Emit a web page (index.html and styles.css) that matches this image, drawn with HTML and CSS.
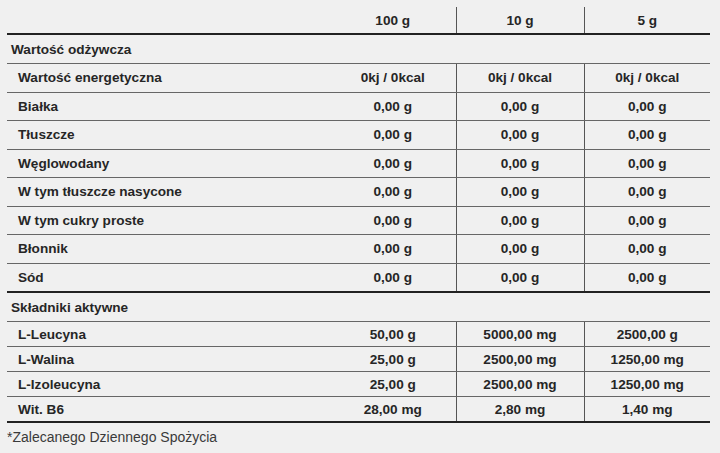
FILE: index.html
```html
<!DOCTYPE html>
<html lang="pl">
<head>
<meta charset="utf-8">
<link rel="stylesheet" href="styles.css">
</head>
<body>
<table class="nutri">
  <colgroup>
    <col class="col-label">
    <col class="col-v1">
    <col class="col-v2">
    <col class="col-v3">
  </colgroup>
  <thead>
    <tr class="head">
      <th></th>
      <th>100 g</th>
      <th class="sep">10 g</th>
      <th class="sep">5 g</th>
    </tr>
  </thead>
  <tbody>
    <tr class="section"><td colspan="4">Wartość odżywcza</td></tr>
    <tr class="row"><td class="label">Wartość energetyczna</td><td>0kj / 0kcal</td><td class="sep">0kj / 0kcal</td><td class="sep">0kj / 0kcal</td></tr>
    <tr class="row"><td class="label">Białka</td><td>0,00 g</td><td class="sep">0,00 g</td><td class="sep">0,00 g</td></tr>
    <tr class="row"><td class="label">Tłuszcze</td><td>0,00 g</td><td class="sep">0,00 g</td><td class="sep">0,00 g</td></tr>
    <tr class="row"><td class="label">Węglowodany</td><td>0,00 g</td><td class="sep">0,00 g</td><td class="sep">0,00 g</td></tr>
    <tr class="row"><td class="label">W tym tłuszcze nasycone</td><td>0,00 g</td><td class="sep">0,00 g</td><td class="sep">0,00 g</td></tr>
    <tr class="row"><td class="label">W tym cukry proste</td><td>0,00 g</td><td class="sep">0,00 g</td><td class="sep">0,00 g</td></tr>
    <tr class="row"><td class="label">Błonnik</td><td>0,00 g</td><td class="sep">0,00 g</td><td class="sep">0,00 g</td></tr>
    <tr class="row last"><td class="label">Sód</td><td>0,00 g</td><td class="sep">0,00 g</td><td class="sep">0,00 g</td></tr>
    <tr class="section"><td colspan="4">Składniki aktywne</td></tr>
    <tr class="row small"><td class="label">L-Leucyna</td><td>50,00 g</td><td class="sep">5000,00 mg</td><td class="sep">2500,00 g</td></tr>
    <tr class="row small"><td class="label">L-Walina</td><td>25,00 g</td><td class="sep">2500,00 mg</td><td class="sep">1250,00 mg</td></tr>
    <tr class="row small"><td class="label">L-Izoleucyna</td><td>25,00 g</td><td class="sep">2500,00 mg</td><td class="sep">1250,00 mg</td></tr>
    <tr class="row small last"><td class="label">Wit. B6</td><td>28,00 mg</td><td class="sep">2,80 mg</td><td class="sep">1,40 mg</td></tr>
  </tbody>
</table>
<p class="note">*Zalecanego Dziennego Spożycia</p>
</body>
</html>
```

FILE: styles.css
```css
html, body {
  background: #f0f0f0;
}
body {
  margin: 7px 10px 0 7px;
  font-family: "Liberation Sans", Arial, sans-serif;
  color: #262626;
}
.nutri {
  width: 703px;
  border-collapse: collapse;
  table-layout: fixed;
  font-size: 13.6px;
  font-weight: bold;
}
.col-label { width: 323px; }
.col-v1 { width: 126px; }
.col-v2 { width: 128px; }
.col-v3 { width: 126px; }

.nutri th,
.nutri td {
  padding: 0;
  text-align: center;
  vertical-align: middle;
}
.head th {
  height: 26px;
  border-bottom: 2px solid #222;
}
.sep {
  border-left: 1px solid #555;
}
.section td {
  height: 28px;
  text-align: left;
  padding-left: 4px;
  border-bottom: 1px solid #666;
}
.row td {
  height: 27.5px;
  border-bottom: 1px solid #666;
}
.row.small td {
  height: 24px;
}
.row.last td {
  border-bottom: 2px solid #222;
}
.row .label {
  text-align: left;
  padding-left: 11px;
}
.note {
  margin: 6px 0 0 0;
  font-size: 14px;
  color: #3a3a3a;
}
```
